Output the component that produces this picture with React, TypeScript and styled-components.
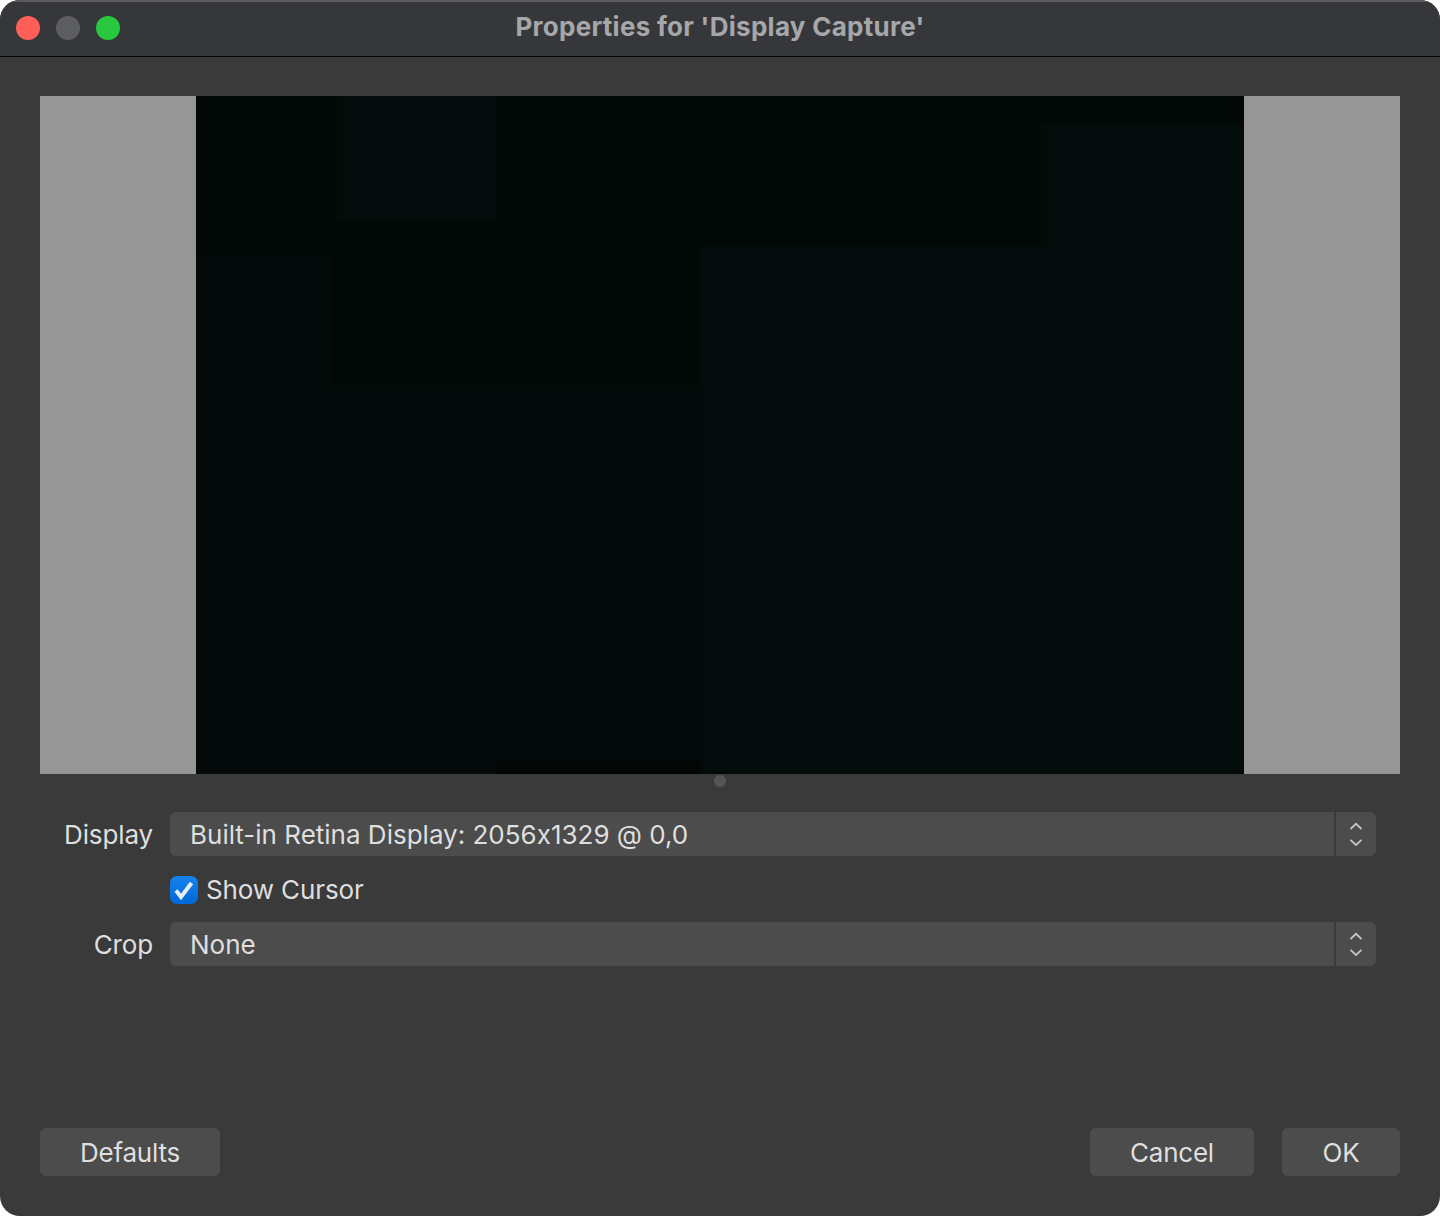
import React from "react";
import styled, { createGlobalStyle } from "styled-components";

const Global = createGlobalStyle`
  html, body { margin: 0; padding: 0; background: #fff; }
  body {
    font-family: Inter, "Noto Sans", "Liberation Sans", sans-serif;
    font-feature-settings: "calt" 0;
    -webkit-font-smoothing: antialiased;
  }
  * { box-sizing: border-box; }
`;

const Window = styled.div`
  width: 1440px;
  height: 1216px;
  background: #3a3a3a;
  border-radius: 20px;
  overflow: hidden;
  display: flex;
  flex-direction: column;
`;

const TitleBar = styled.header`
  position: relative;
  height: 57px;
  flex: none;
  background: #36373a;
  border-top: 2px solid #5b5b5d;
  border-bottom: 1px solid #050505;
  display: flex;
  align-items: center;
  justify-content: center;
`;

const Lights = styled.div`
  position: absolute;
  left: 16px;
  top: 14px;
  display: flex;
  gap: 16px;
`;

const Light = styled.span<{ $color: string }>`
  width: 24px;
  height: 24px;
  border-radius: 50%;
  background: ${(p) => p.$color};
`;

const Title = styled.h1`
  margin: 0 0 4px 0;
  font-size: 26px;
  line-height: 32px;
  font-weight: 700;
  letter-spacing: 0.28px;
  color: #a6a7a9;
`;

const Body = styled.main`
  flex: 1;
  display: flex;
  flex-direction: column;
  padding: 39px 40px 40px;
`;

const Preview = styled.section`
  height: 678px;
  flex: none;
  background: #969696;
  padding: 0 156px;
`;

const Screen = styled.svg`
  display: block;
  width: 1048px;
  height: 678px;
`;

const Splitter = styled.div`
  height: 38px;
  flex: none;
  display: flex;
  justify-content: center;
  padding-top: 1px;
`;

const Handle = styled.span`
  width: 12px;
  height: 12px;
  border-radius: 50%;
  background: #555;
`;

const Form = styled.form`
  display: grid;
  grid-template-columns: 113px 1206px;
  column-gap: 17px;
  row-gap: 20px;
  align-items: center;
  font-size: 26px;
  letter-spacing: -0.13px;
  color: #dfdfdf;
`;

const Label = styled.label`
  text-align: right;
  line-height: 46px;
  height: 44px;
`;

const Select = styled.div`
  height: 44px;
  display: flex;
  border-radius: 6px;
  overflow: hidden;
  background: #4c4c4c;
`;

const SelectValue = styled.div`
  flex: 1;
  padding-left: 20px;
  line-height: 46px;
  letter-spacing: 0;
  white-space: nowrap;
`;

const Stepper = styled.div`
  width: 42px;
  flex: none;
  border-left: 2px solid #3a3a3a;
  display: flex;
  align-items: center;
  justify-content: center;
`;

const CheckRow = styled.div`
  grid-column: 2;
  display: flex;
  align-items: center;
  gap: 8px;
  height: 28px;
  line-height: 32px;
  margin-bottom: -2px;
`;

const Box = styled.span`
  width: 28px;
  height: 28px;
  border-radius: 7px;
  background: linear-gradient(#1683ee, #0067d6);
  display: flex;
  align-items: center;
  justify-content: center;
`;

const Footer = styled.footer`
  margin-top: auto;
  display: flex;
  align-items: center;
  gap: 28px;
`;

const Button = styled.button<{ $width: number; $push?: boolean }>`
  width: ${(p) => p.$width}px;
  height: 48px;
  margin-right: ${(p) => (p.$push ? "auto" : "0")};
  border: 0;
  border-radius: 6px;
  background: #4c4c4c;
  color: #dfdfdf;
  font: inherit;
  font-size: 26px;
  letter-spacing: -0.25px;
  padding: 0;
`;

const patches: [number, number, number, number, string][] = [
  [0, 160, 135, 518, "#030a09"],
  [141, 0, 160, 125, "#040b0b"],
  [135, 290, 913, 388, "#030a09"],
  [505, 150, 543, 528, "#040b0b"],
  [845, 28, 203, 130, "#040b0b"],
  [300, 665, 205, 13, "#020706"],
];

const Chevrons = () => (
  <svg width="14" height="26" viewBox="0 0 14 26" fill="none" stroke="#c6c6c6" strokeWidth="1.8" aria-hidden="true">
    <path d="M1.5 8 7 2.8 12.5 8" />
    <path d="M1.5 18.8 7 24 12.5 18.8" />
  </svg>
);

export default function App() {
  return (
    <>
      <Global />
      <Window>
        <TitleBar>
          <Lights>
            <Light $color="#ff5f57" />
            <Light $color="#5d5e60" />
            <Light $color="#28c840" />
          </Lights>
          <Title>Properties for 'Display Capture'</Title>
        </TitleBar>
        <Body>
          <Preview>
            <Screen viewBox="0 0 1048 678" aria-hidden="true">
              <rect width="1048" height="678" fill="#010806" />
              {patches.map(([x, y, w, h, c]) => (
                <rect key={`${x}-${y}`} x={x} y={y} width={w} height={h} fill={c} />
              ))}
            </Screen>
          </Preview>
          <Splitter>
            <Handle />
          </Splitter>
          <Form>
            <Label>Display</Label>
            <Select>
              <SelectValue>Built-in Retina Display: 2056x1329 @ 0,0</SelectValue>
              <Stepper>
                <Chevrons />
              </Stepper>
            </Select>
            <CheckRow>
              <Box>
                <svg width="22" height="22" viewBox="0 0 22 22" fill="none" stroke="#e4eefa" strokeWidth="4" aria-hidden="true">
                  <path d="M3 11.5 8 18 18.5 4" />
                </svg>
              </Box>
              Show Cursor
            </CheckRow>
            <Label>Crop</Label>
            <Select>
              <SelectValue>None</SelectValue>
              <Stepper>
                <Chevrons />
              </Stepper>
            </Select>
          </Form>
          <Footer>
            <Button type="button" $width={180} $push>Defaults</Button>
            <Button type="button" $width={164}>Cancel</Button>
            <Button type="button" $width={118}>OK</Button>
          </Footer>
        </Body>
      </Window>
    </>
  );
}
